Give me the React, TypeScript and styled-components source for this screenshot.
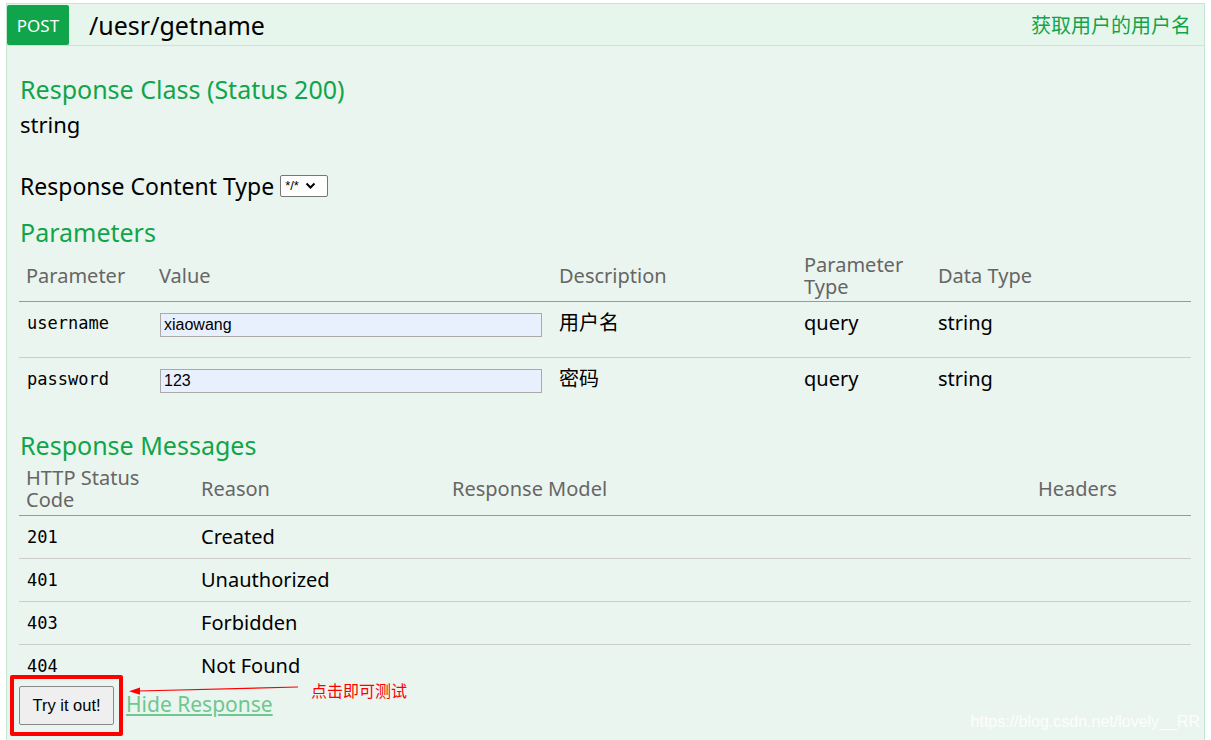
import React from "react";
import styled, { createGlobalStyle } from "styled-components";

const Global = createGlobalStyle`
  html, body { margin: 0; padding: 0; background: #ffffff; }
  body { font-family: "Noto Sans", "Noto Sans CJK SC", sans-serif; }
`;

const Operation = styled.div`
  margin: 3px 0 0 6px;
  width: 1199px;
  height: 740px;
  box-sizing: border-box;
  border: 1px solid #c3e8d1;
  border-bottom: none;
  background: #ebf5ef;
  position: relative;
`;

const Heading = styled.div`
  display: flex;
  align-items: center;
  height: 41px;
  background: #e7f6ec;
  border-bottom: 1px solid #c3e8d1;
`;

const Method = styled.span`
  display: flex;
  align-items: center;
  justify-content: center;
  width: 62px;
  height: 40px;
  background: #10a54a;
  color: #ffffff;
  border-radius: 2px;
  font-size: 17px;
  padding-top: 1px;
  box-sizing: border-box;
`;

const Path = styled.span`
  margin-left: 20px;
  font-size: 25px;
  color: #000000;
  flex: 1;
`;

const Summary = styled.span`
  color: #10a54a;
  font-size: 20px;
  margin-right: 13px;
  font-family: "Noto Sans CJK SC", sans-serif;
`;

const Content = styled.div`
  padding: 27px 13px 0 12px;
`;

const SectionTitle = styled.h4<{ $top?: number }>`
  margin: ${(p) => p.$top ?? 0}px 0 0 1px;
  font-weight: normal;
  color: #10a54a;
  font-size: 25px;
  line-height: 32px;
`;

const Plain = styled.div<{ $top?: number; $size?: number }>`
  margin: ${(p) => p.$top ?? 0}px 0 0 1px;
  font-size: ${(p) => p.$size ?? 22}px;
  line-height: 30px;
  color: #000;
  display: flex;
  align-items: center;
`;

const Select = styled.span`
  margin-left: 6px;
  display: inline-flex;
  align-items: center;
  gap: 6px;
  width: 48px;
  height: 22px;
  box-sizing: border-box;
  border: 1px solid #767676;
  border-radius: 2px;
  background: #fff;
  padding: 0 4px;
  font-family: "Liberation Sans", sans-serif;
  font-size: 13px;
  color: #000;
`;

const Table = styled.table`
  width: 1172px;
  border-collapse: collapse;
  table-layout: fixed;
`;

const HeadRow = styled.tr<{ $h: number }>`
  height: ${(p) => p.$h}px;
`;

const Th = styled.th<{ $w: number }>`
  width: ${(p) => p.$w - 7}px;
  text-align: left;
  font-weight: normal;
  color: #666;
  font-size: 20px;
  line-height: 22px;
  padding: 3px 0 0 7px;
  vertical-align: middle;
  border-bottom: 1px solid #999;
`;

const WrapLabel = styled.span`
  display: inline-block;
  max-width: 130px;
`;

const Row = styled.tr<{ $h: number; $top?: boolean }>`
  height: ${(p) => p.$h}px;
  & + & td { border-top: 1px solid #ccc; }
  & td {
    vertical-align: ${(p) => (p.$top ? "top" : "middle")};
    padding-top: ${(p) => (p.$top ? 7 : 2)}px;
  }
`;

const Td = styled.td`
  padding-left: 7px;
  font-size: 20px;
  line-height: 28px;
  color: #000;
`;

const Code = styled.td`
  padding-left: 8px;
  font-family: "DejaVu Sans Mono", monospace;
  font-size: 17px;
  line-height: 28px;
  color: #000;
`;

const Input = styled.div`
  width: 382px;
  height: 24px;
  margin: 4px 0 0 1px;
  box-sizing: border-box;
  border: 1px solid #aaa;
  background: #e8f0fe;
  font-family: "Liberation Sans", sans-serif;
  font-size: 16px;
  line-height: 22px;
  padding-left: 3px;
  color: #000;
`;

const Footer = styled.div`
  position: relative;
  display: flex;
  align-items: center;
  margin: -12px 0 0 -9px;
`;

const Highlight = styled.div`
  border: 4px solid #ff0000;
  border-radius: 2px;
  padding: 7px 5px;
`;

const Button = styled.button`
  width: 95px;
  height: 39px;
  box-sizing: border-box;
  background: #efefef;
  border: 1px solid #888;
  border-radius: 2px;
  font-family: "Liberation Sans", sans-serif;
  font-size: 16.5px;
  color: #000;
  padding: 0;
`;

const HideLink = styled.a`
  margin-left: 3px;
  margin-top: -3px;
  font-size: 21px;
  color: #6dc78f;
  text-decoration: underline;
`;

const Arrow = styled.svg`
  position: absolute;
  left: 116px;
  top: 0;
`;

const Note = styled.span`
  position: absolute;
  left: 301px;
  top: 4px;
  color: #ff0000;
  font-size: 16px;
  line-height: 22px;
  font-family: "Noto Sans CJK SC", sans-serif;
`;

const Watermark = styled.span`
  position: absolute;
  right: 4px;
  bottom: 12px;
  color: rgba(255, 255, 255, 0.9);
  font-family: "Liberation Sans", sans-serif;
  font-size: 16px;
`;

const params = [
  { name: "username", value: "xiaowang", desc: "用户名" },
  { name: "password", value: "123", desc: "密码" },
];

const messages = [
  ["201", "Created"],
  ["401", "Unauthorized"],
  ["403", "Forbidden"],
  ["404", "Not Found"],
];

export default function App() {
  return (
    <>
      <Global />
      <Operation>
        <Heading>
          <Method>POST</Method>
          <Path>/uesr/getname</Path>
          <Summary>获取用户的用户名</Summary>
        </Heading>
        <Content>
          <SectionTitle>Response Class (Status 200)</SectionTitle>
          <Plain $top={4}>string</Plain>
          <Plain $top={32} $size={23}>
            Response Content Type
            <Select>
              */*
              <svg width="11" height="8" viewBox="0 0 11 8">
                <path d="M1.5 1.5 L5.5 5.5 L9.5 1.5" stroke="#000" strokeWidth="2" fill="none" />
              </svg>
            </Select>
          </Plain>
          <SectionTitle $top={15}>Parameters</SectionTitle>
          <Table>
            <thead>
              <HeadRow $h={53}>
                <Th $w={133}>Parameter</Th>
                <Th $w={400}>Value</Th>
                <Th $w={245}>Description</Th>
                <Th $w={134}>Parameter Type</Th>
                <Th $w={260}>Data Type</Th>
              </HeadRow>
            </thead>
            <tbody>
              {params.map((p) => (
                <Row $h={56} $top key={p.name}>
                  <Code>{p.name}</Code>
                  <Td><Input>{p.value}</Input></Td>
                  <Td>{p.desc}</Td>
                  <Td>query</Td>
                  <Td>string</Td>
                </Row>
              ))}
            </tbody>
          </Table>
          <SectionTitle $top={16}>Response Messages</SectionTitle>
          <Table>
            <thead>
              <HeadRow $h={54}>
                <Th $w={175}><WrapLabel>HTTP Status Code</WrapLabel></Th>
                <Th $w={251}>Reason</Th>
                <Th $w={586}>Response Model</Th>
                <Th $w={160}>Headers</Th>
              </HeadRow>
            </thead>
            <tbody>
              {messages.map(([c, r]) => (
                <Row $h={43} key={c}>
                  <Code>{c}</Code>
                  <Td>{r}</Td>
                  <Td />
                  <Td />
                </Row>
              ))}
            </tbody>
          </Table>
          <Footer>
            <Highlight>
              <Button>Try it out!</Button>
            </Highlight>
            <HideLink>Hide Response</HideLink>
            <Arrow width="190" height="24" viewBox="0 0 190 24">
              <line x1="172" y1="12" x2="12" y2="16" stroke="#ff0000" strokeWidth="1.2" />
              <polygon points="3,16.2 14,12.5 14,19.8" fill="#ff0000" />
            </Arrow>
            <Note>点击即可测试</Note>
          </Footer>
        </Content>
        <Watermark>https://blog.csdn.net/lovely__RR</Watermark>
      </Operation>
    </>
  );
}
